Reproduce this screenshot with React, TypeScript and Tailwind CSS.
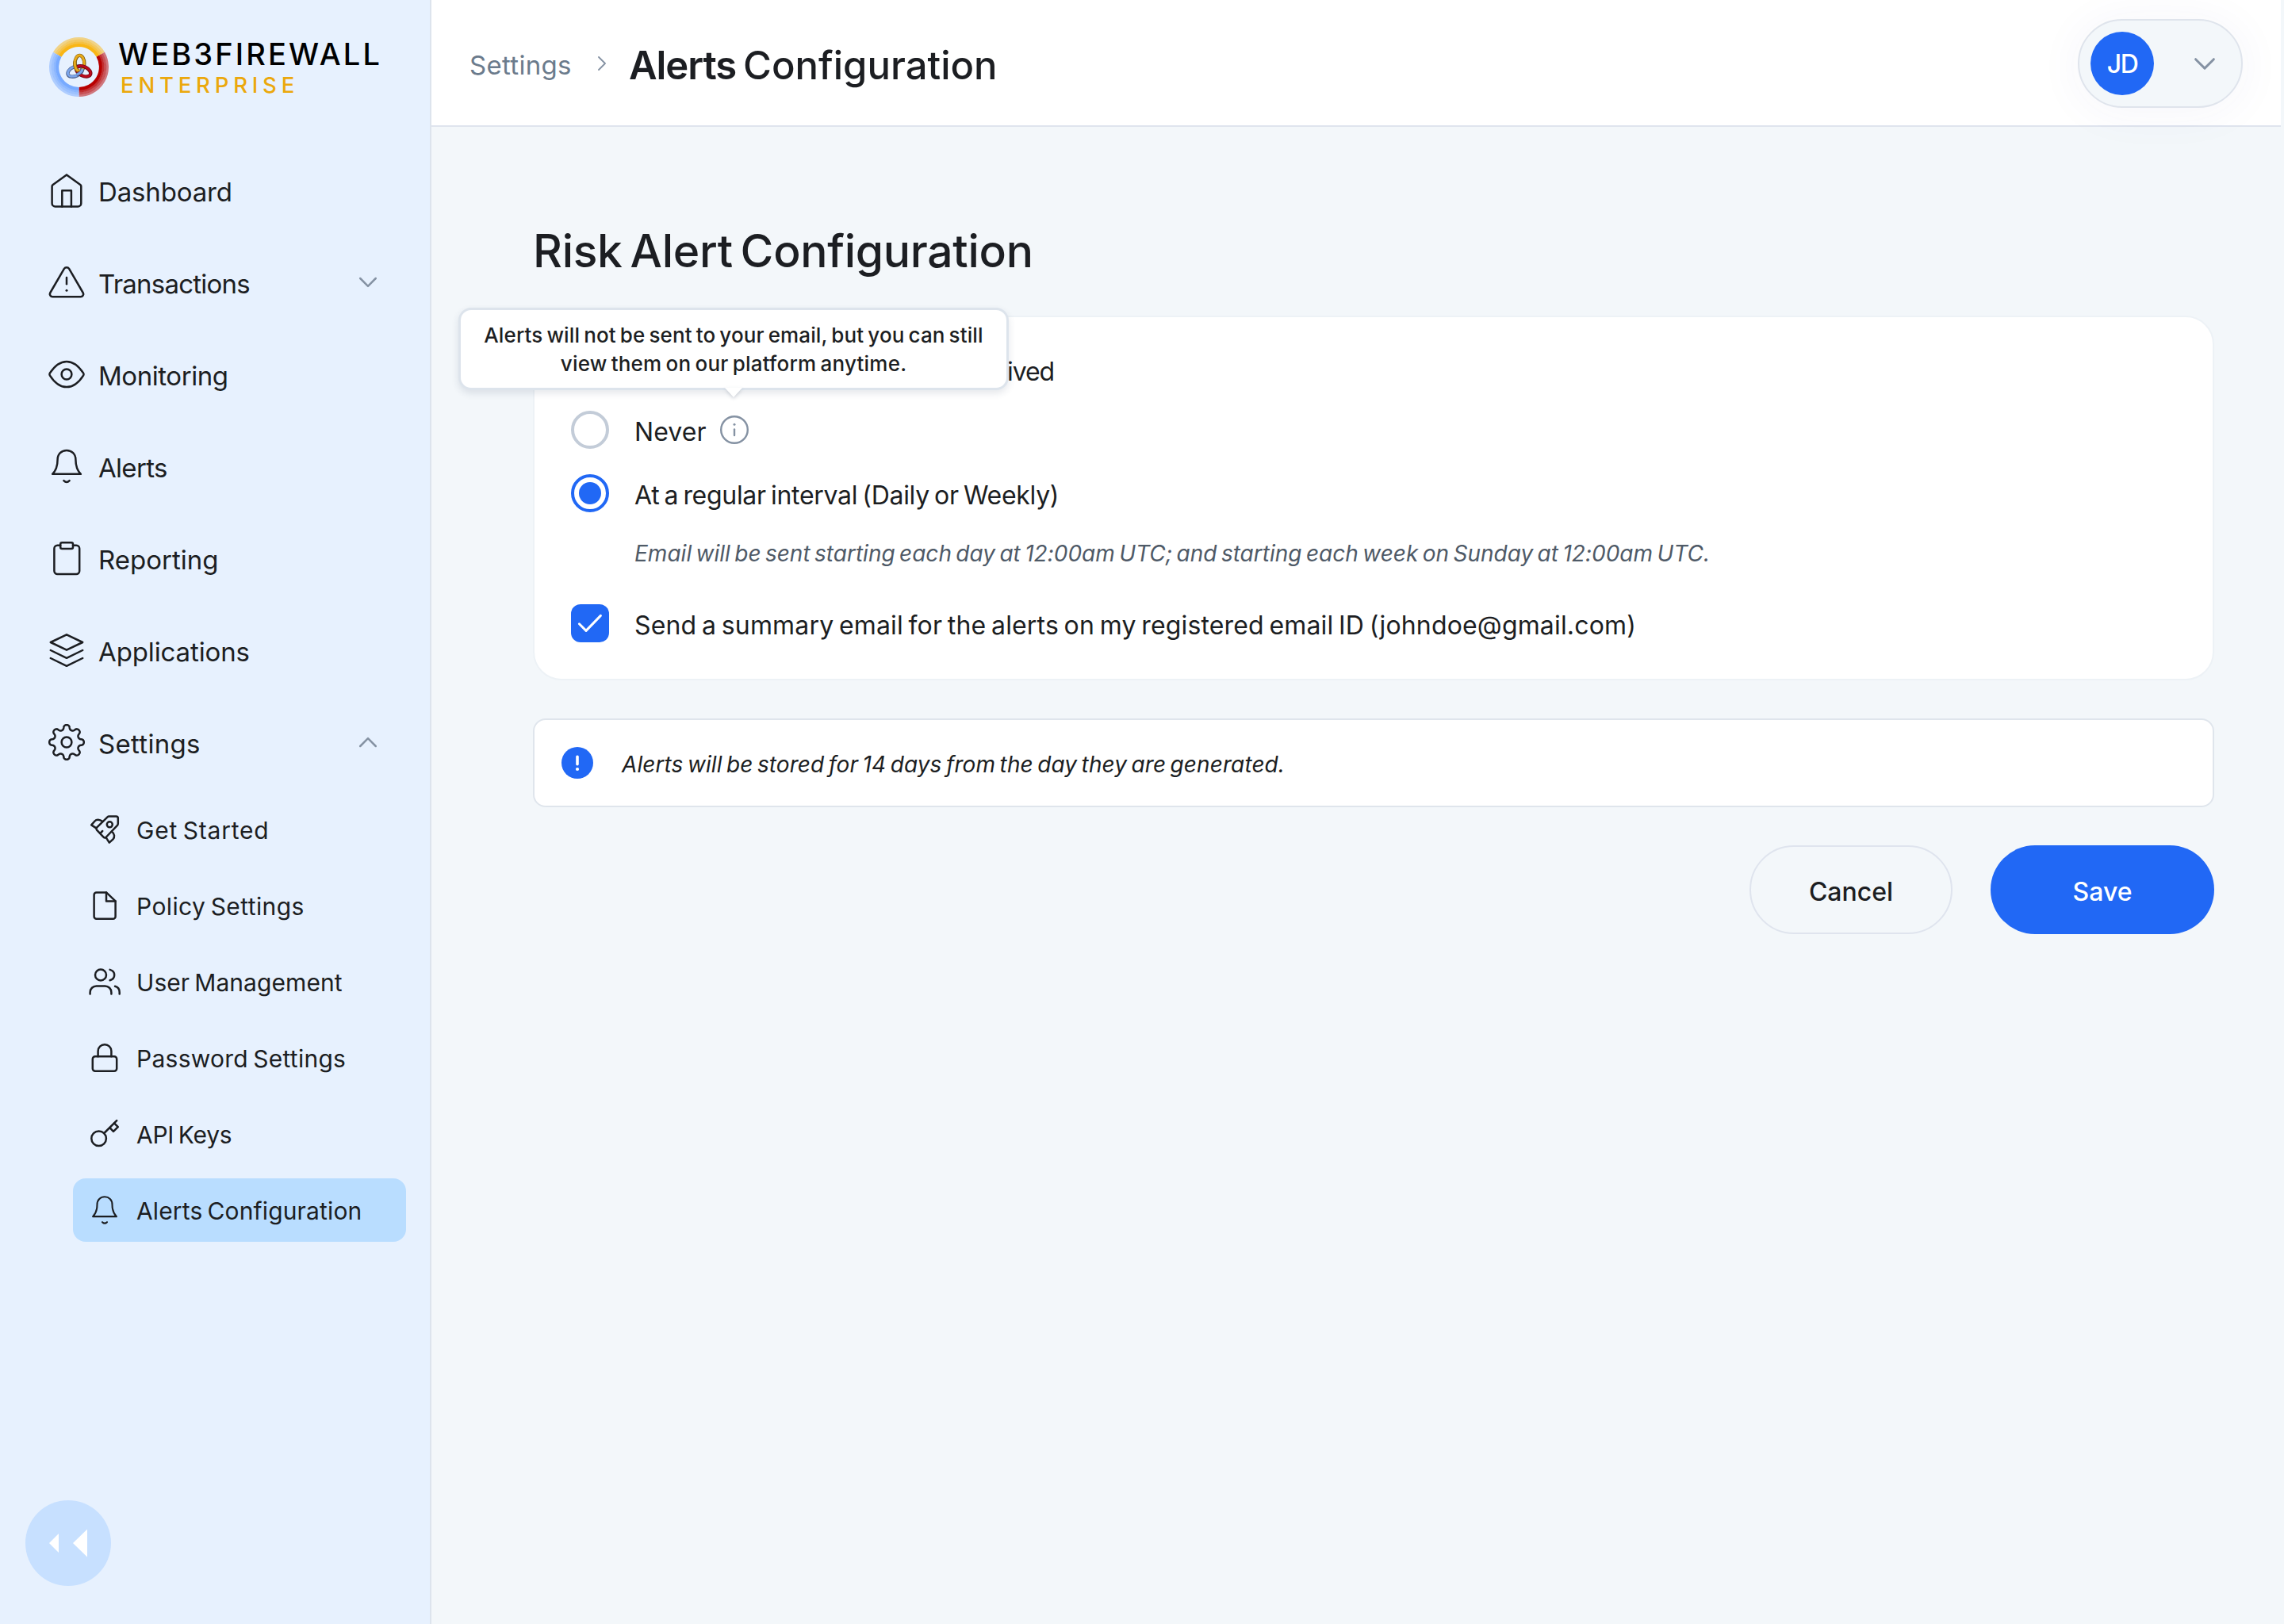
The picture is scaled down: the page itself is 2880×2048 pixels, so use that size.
import type { ReactNode } from 'react';

/**
 * Alerts Configuration — settings page with sidebar, header and risk alert form.
 */
interface NavItem {
  label: string;
  icon: ReactNode;
  tracking: string;
  chevron?: 'up' | 'down';
}

interface SubItem {
  label: string;
  icon: ReactNode;
  tracking: string;
  active?: boolean;
}

function Icon({ size = 48, className = 'size-12', children }: { size?: number; className?: string; children: ReactNode }) {
  return (
    <svg
      viewBox={`0 0 ${size} ${size}`}
      className={`${className} shrink-0`}
      fill="none"
      stroke="currentColor"
      strokeWidth={2.5}
      strokeLinecap="round"
      strokeLinejoin="round"
    >
      {children}
    </svg>
  );
}

// Eight rounded teeth around the centre of a 48px box
function gearPath(): string {
  const pts: string[] = [];
  for (let i = 0; i < 240; i++) {
    const a = (i / 240) * Math.PI * 2;
    const r = 18.9 + 2.9 * Math.cos(8 * a);
    const t = a + 0.035 * Math.sin(16 * a);
    pts.push(`${(24 + r * Math.sin(t)).toFixed(2)} ${(24 - r * Math.cos(t)).toFixed(2)}`);
  }
  return `M${pts.join('L')}Z`;
}

const BELL = (
  <>
    <path d="M12.6 15.5C12.6 8.5 17.5 3.9 24 3.9S35.4 8.5 35.4 15.5C35.4 24 37.5 29.5 41.9 33.8H6.1C10.5 29.5 12.6 24 12.6 15.5Z" />
    <path d="M20.4 42.2q3.6 3.6 7.2 0" />
  </>
);

const NAV: NavItem[] = [
  {
    label: 'Dashboard',
    tracking: 'tracking-[-0.15px]',
    icon: (
      <Icon>
        <path d="M24 4.4 41.3 16.9Q42.3 17.7 42.3 19V40.4a4 4 0 0 1-4 4H9.6a4 4 0 0 1-4-4V19Q5.6 17.7 6.7 16.9Z" />
        <path d="M18.3 44.4V24.3H29.9V44.4" />
      </Icon>
    ),
  },
  {
    label: 'Transactions',
    tracking: 'tracking-[-0.78px]',
    chevron: 'down',
    icon: (
      <Icon>
        <path d="M20.9 6.9a3.6 3.6 0 0 1 6.2 0L44.6 37a3.5 3.5 0 0 1-3 5.3H6.4a3.5 3.5 0 0 1-3-5.3Z" />
        <path d="M24 18V26.2" />
        <circle cx="24" cy="34.2" r="1.5" fill="currentColor" stroke="none" />
      </Icon>
    ),
  },
  {
    label: 'Monitoring',
    tracking: 'tracking-[-0.45px]',
    icon: (
      <Icon>
        <path d="M2.8 22.7C9 13 16 7.9 24 7.9S39 13 45.2 22.7Q46 24 45.2 25.3C39 35 32 40.1 24 40.1S9 35 2.8 25.3Q2 24 2.8 22.7Z" />
        <circle cx="24" cy="24" r="6.4" />
      </Icon>
    ),
  },
  { label: 'Alerts', tracking: 'tracking-[-0.7px]', icon: <Icon>{BELL}</Icon> },
  {
    label: 'Reporting',
    tracking: 'tracking-normal',
    icon: (
      <Icon>
        <path d="M16.2 7.8H12.4a4 4 0 0 0-4 4V40a4 4 0 0 0 4 4H36.2a4 4 0 0 0 4-4V11.8a4 4 0 0 0-4-4H32" />
        <rect x="16.2" y="4.2" width="15.8" height="7.8" rx="2" />
      </Icon>
    ),
  },
  {
    label: 'Applications',
    tracking: 'tracking-[-0.12px]',
    icon: (
      <Icon>
        <path d="M24 4.3 44.2 14 24 23.7 3.8 14Z" />
        <path d="M3.8 24 24 33.8 44.2 24" />
        <path d="M3.8 34 24 43.8 44.2 34" />
      </Icon>
    ),
  },
  {
    label: 'Settings',
    tracking: 'tracking-[0.3px]',
    chevron: 'up',
    icon: (
      <Icon>
        <path d={gearPath()} />
        <circle cx="24" cy="24" r="6.4" />
      </Icon>
    ),
  },
];

const SUB: SubItem[] = [
  {
    label: 'Get Started',
    tracking: 'tracking-[0.78px]',
    icon: (
      <Icon size={40} className="size-10">
        <path d="M25.5 3.5H34.5Q36.8 3.5 36.8 5.8V12.5Q36.8 14 35.7 15.2L21.5 30Q20 31.2 18.5 29.6L10 20.6Q8.8 19.1 10 17.6L23.5 4.4Q24.4 3.5 25.5 3.5Z" />
        <circle cx="26.3" cy="13.8" r="3.5" />
        <path d="M17.3 10C13.5 7 9.5 7.2 7.5 9.5L3.2 14.4 9.4 18.4" />
        <path d="M29 22.8C32.8 25.5 32.8 29.8 30.5 32.3L25.8 36.6 21.8 30.4" />
        <path d="M14.4 24.8 17.2 22" />
      </Icon>
    ),
  },
  {
    label: 'Policy Settings',
    tracking: 'tracking-[0.4px]',
    icon: (
      <Icon size={40} className="size-10">
        <path d="M22 3.4H9.6a3 3 0 0 0-3 3V33.8a3 3 0 0 0 3 3H30.6a3 3 0 0 0 3-3V14.4Z" />
        <path d="M22 3.4V14.4H33.6" />
      </Icon>
    ),
  },
  {
    label: 'User Management',
    tracking: 'tracking-[0.07px]',
    icon: (
      <Icon size={40} className="size-10">
        <circle cx="15" cy="11.5" r="7" />
        <path d="M1.6 35.4V33.4a8 8 0 0 1 8-8H20.4a8 8 0 0 1 8 8V35.4" />
        <path d="M26.6 4.9C30 5.8 32.2 8.4 32.2 11.6S30 17.4 26.6 18.3" />
        <path d="M33 25.7C36.4 26.6 38.7 29.5 38.7 33.2V35.4" />
      </Icon>
    ),
  },
  {
    label: 'Password Settings',
    tracking: 'tracking-[0.27px]',
    icon: (
      <Icon size={40} className="size-10">
        <rect x="4.8" y="18.2" width="30.4" height="18.6" rx="3.2" />
        <path d="M11.6 18.2V11.6a8.4 8.4 0 0 1 16.8 0V18.2" />
      </Icon>
    ),
  },
  {
    label: 'API Keys',
    tracking: 'tracking-[-0.25px]',
    icon: (
      <Icon size={40} className="size-10">
        <circle cx="12.6" cy="25.7" r="9.3" />
        <path d="M19.3 19 35.2 3.2" />
        <path d="M26.4 12.2 31 16.9 36.8 11.2 32 6.4" />
      </Icon>
    ),
  },
  { label: 'Alerts Configuration', tracking: 'tracking-[0.14px]', active: true, icon: <Icon className="size-10">{BELL}</Icon> },
];

function Chevron({ up, className }: { up?: boolean; className: string }) {
  return (
    <svg
      viewBox="0 0 24 16"
      className={`${className} shrink-0`}
      fill="none"
      stroke="#8592a3"
      strokeWidth={2.5}
      strokeLinecap="round"
      strokeLinejoin="round"
    >
      <path d={up ? 'M2.2 13 12 3.2 21.8 13' : 'M2.2 3 12 12.8 21.8 3'} />
    </svg>
  );
}

const RINGS = [
  { r: 36, w: 3, o: 0.5 },
  { r: 33.2, w: 3, o: 0.65 },
  { r: 30.4, w: 3, o: 0.8 },
  { r: 27.4, w: 4, o: 1 },
];

function LogoMark() {
  return (
    <svg viewBox="-37.5 -37.5 75 75" className="mt-[1px] size-[75px] shrink-0" fill="none">
      {RINGS.map(({ r, w, o }) => (
        <g key={r} strokeWidth={w} opacity={o}>
          <path d={`M${-r * 0.866} ${-r * 0.5}A${r} ${r} 0 0 1 ${r * 0.866} ${-r * 0.5}`} stroke="#f9b616" />
          <path d={`M${r * 0.866} ${-r * 0.5}A${r} ${r} 0 0 1 0 ${r}`} stroke="#b80000" />
          <path d={`M0 ${r}A${r} ${r} 0 0 1 ${-r * 0.866} ${-r * 0.5}`} stroke="#78aaff" />
        </g>
      ))}
      <ellipse cx="-4.8" cy="5.6" rx="9.8" ry="5.8" transform="rotate(-24 -4.8 5.6)" stroke="#4a5f8c" strokeWidth="4.4" />
      <ellipse cx="-4.8" cy="5.3" rx="9.8" ry="5.8" transform="rotate(-24 -4.8 5.3)" stroke="#7ba5ea" strokeWidth="2.8" />
      <ellipse cx="0.9" cy="-4.6" rx="5.9" ry="10" stroke="#7d5c10" strokeWidth="4.4" />
      <ellipse cx="0.7" cy="-4.8" rx="5.9" ry="10" stroke="#e8ab1c" strokeWidth="2.9" />
      <ellipse cx="5.8" cy="5.4" rx="9.6" ry="5.8" transform="rotate(26 5.8 5.4)" stroke="#6d0713" strokeWidth="4.4" />
      <ellipse cx="5.8" cy="5.2" rx="9.6" ry="5.8" transform="rotate(26 5.8 5.2)" stroke="#bd0a1c" strokeWidth="2.7" />
      <path d="M-5.1-7C-5.4-1-4 3.8-0.6 5" stroke="#7d5c10" strokeWidth="4.4" />
      <path d="M-5.2-7.2C-5.5-1-4 3.6-0.6 4.8" stroke="#e8ab1c" strokeWidth="2.9" />
      <path d="M-3 10C1 8.4 4 5.6 4.6 2.4" stroke="#4a5f8c" strokeWidth="4.2" />
      <path d="M-3 9.8C1 8.2 4 5.4 4.6 2.2" stroke="#7ba5ea" strokeWidth="2.8" />
    </svg>
  );
}

function Sidebar() {
  return (
    <aside className="flex h-full w-[544px] shrink-0 flex-col border-r-2 border-[#dde4ed] bg-[#e7f1fe]">
      <div className="flex h-[200px] gap-3 pt-[46px] pl-[62px]">
        <LogoMark />
        <div className="flex flex-col whitespace-nowrap">
          <span className="text-[38px] leading-[44px] font-medium tracking-[3.1px] text-black">WEB3FIREWALL</span>
          <span className="pl-[3px] text-[27.5px] leading-[34px] font-medium tracking-[5.8px] text-[#eba80c]">ENTERPRISE</span>
        </div>
      </div>

      <nav className="flex flex-col gap-9">
        {NAV.map((item) => (
          <a key={item.label} className="flex h-20 items-center gap-4 pr-[66px] pl-[60px] text-[#1c1e22]">
            {item.icon}
            <span className={`${item.tracking} flex-1 pt-1 text-[33px] leading-10`}>{item.label}</span>
            {item.chevron && <Chevron up={item.chevron === 'up'} className="h-4 w-6" />}
          </a>
        ))}
      </nav>

      <nav className="mt-[30px] ml-[92px] flex w-[420px] flex-col gap-4">
        {SUB.map((item) => (
          <a
            key={item.label}
            className={`${item.active ? 'bg-[#b9ddff]' : ''} flex h-20 items-center gap-5 rounded-2xl pl-5 text-[#1c1e22]`}
          >
            {item.icon}
            <span className={`${item.tracking} pt-0.5 text-[30px] leading-10 [word-spacing:-2.5px]`}>{item.label}</span>
          </a>
        ))}
      </nav>

      <button className="mt-auto mb-12 ml-8 flex size-[108px] items-center justify-center rounded-full bg-[#c7e0ff]">
        <svg viewBox="0 0 48 36" className="h-9 w-12" fill="#fff">
          <path d="M0 18 12 6V30Z" />
          <path d="M30 18 48 0.6V35.4Z" />
        </svg>
      </button>
    </aside>
  );
}

function Header() {
  return (
    <header className="flex h-40 w-[2332px] items-center border-b-2 border-[#dfe4ee] bg-white px-12 pt-0.5">
      <span className="w-[162px] pt-1 text-[33px] leading-10 tracking-[0.3px] text-[#6b7b8c]">Settings</span>
      <svg viewBox="0 0 10 18" className="h-[18px] w-[10px]" fill="none" stroke="#8592a3" strokeWidth={1.8} strokeLinecap="round" strokeLinejoin="round">
        <path d="M1 1 9 9 1 17" />
      </svg>
      <h1 className="flex flex-1 gap-[9px] pt-[5px] pl-[29px] text-[49px] leading-[60px] font-[450] text-[#1c1e22]">
        <b className="font-semibold tracking-[-1.1px]">Alerts</b>
        <span>Configuration</span>
      </h1>
      <button className="flex h-28 w-52 items-center justify-between rounded-full border-2 border-[#dfe4ec] bg-[#f3f7fa] pr-8 pl-[14px] shadow-[0_4px_60px_rgba(60,60,160,0.05)]">
        <span className="flex size-20 items-center justify-center rounded-full bg-[#2168f5] pt-0.5 text-[32px] font-medium tracking-[-1.5px] text-white">
          JD
        </span>
        <Chevron className="h-[19px] w-7" />
      </button>
    </header>
  );
}

function Tooltip() {
  return (
    <div className="absolute bottom-[70px] left-[19px] flex h-[104px] w-[694px] -translate-x-1/2 flex-col items-center justify-center rounded-2xl border-[3px] border-[#dde4ec] bg-white pt-0.5 text-center text-[26px] leading-9 font-[450] whitespace-nowrap text-[#1c1e22] shadow-[0_4px_10px_rgba(40,60,90,0.12)] [word-spacing:-2px]">
      <span className="tracking-[0.12px]">Alerts will not be sent to your email, but you can still</span>
      <span className="tracking-[0.22px]">view them on our platform anytime.</span>
      <svg viewBox="0 0 22 12" className="absolute top-full left-1/2 h-3 w-[22px] -translate-x-1/2 drop-shadow-[0_2px_2px_rgba(40,60,90,0.2)]">
        <path d="M0 0H22L11 12Z" fill="#fff" />
      </svg>
    </div>
  );
}

function RiskAlertCard() {
  return (
    <section className="mt-[45px] h-[460px] rounded-[36px] border-2 border-[#edf2f6] bg-white pt-11 pl-[46px] text-[32px] text-[#1c1e22] [word-spacing:-2.5px]">
      <p className="ml-[550px] h-12 pt-px leading-[48px] tracking-[-1.1px]">ived</p>

      <div className="mt-[26px] flex h-12 items-center">
        <span className="size-12 rounded-full border-4 border-[#c3ccd8]" />
        <span className="w-[138px] pt-1.5 pl-8 tracking-[0.1px]">Never</span>
        <span className="relative size-10">
          <svg viewBox="0 0 40 40" className="size-10" fill="none" stroke="#8592a3" strokeWidth={2.4} strokeLinecap="round">
            <circle cx="20" cy="20" r="16.8" />
            <path d="M20 19.5V27" />
            <circle cx="20" cy="13.3" r="1.5" fill="#8592a3" stroke="none" />
          </svg>
          <Tooltip />
        </span>
      </div>

      <div className="mt-8 flex h-12 items-center gap-8">
        <span className="flex size-12 items-center justify-center rounded-full border-4 border-[#2168f5]">
          <span className="size-7 rounded-full bg-[#2168f5]" />
        </span>
        <span className="pt-1.5 tracking-[-0.3px]">At a regular interval (Daily or Weekly)</span>
      </div>

      <p className="mt-8 ml-20 h-10 text-[28px] leading-10 tracking-[0.01px] text-[#4f5a67] italic">
        Email will be sent starting each day at 12:00am UTC; and starting each week on Sunday at 12:00am UTC.
      </p>

      <div className="mt-11 flex h-12 items-center gap-8">
        <span className="flex size-12 items-center justify-center rounded-xl bg-[#2168f5]">
          <svg viewBox="0 0 32 24" className="h-6 w-8" fill="none" stroke="#fff" strokeWidth={3} strokeLinecap="round" strokeLinejoin="round">
            <path d="M2.4 12.8 11 21.4 29.4 2.4" />
          </svg>
        </span>
        <span className="pt-1.5 tracking-[0.16px]">
          Send a summary email for the alerts on my registered email ID (johndoe@gmail.com)
        </span>
      </div>
    </section>
  );
}

export default function App() {
  return (
    <div className="flex h-[2048px] w-[2880px] overflow-hidden bg-[#f3f7fa] font-['Inter',sans-serif]">
      <Sidebar />
      <div className="flex flex-1 flex-col">
        <Header />
        <main className="w-[2248px] pt-[121px] pl-32">
          <h2 className="text-[57px] leading-[72px] font-[450] tracking-[-0.3px] text-[#1c1e22] [word-spacing:-5px]">
            Risk Alert Configuration
          </h2>
          <RiskAlertCard />

          <div className="mt-12 flex h-28 items-center gap-9 rounded-2xl border-2 border-[#dfe5ec] bg-white pl-[34px]">
            <svg viewBox="0 0 40 40" className="size-10" fill="#fff">
              <circle cx="20" cy="20" r="20" fill="#2168f5" />
              <rect x="18.2" y="10.4" width="3.6" height="13.2" rx="1.8" />
              <circle cx="20" cy="28" r="2.1" />
            </svg>
            <p className="pt-1 text-[28px] tracking-[0.09px] text-[#1c1e22] italic [word-spacing:-2.5px]">
              Alerts will be stored for 14 days from the day they are generated.
            </p>
          </div>

          <div className="mt-12 flex justify-end gap-12 text-[32px] font-[550]">
            <button className="h-28 w-64 rounded-full border-2 border-[#dfe4ee] pt-1.5 text-[#1c1e22]">Cancel</button>
            <button className="h-28 w-[282px] rounded-full bg-[#2168f5] pt-1.5 text-white">Save</button>
          </div>
        </main>
      </div>
    </div>
  );
}
